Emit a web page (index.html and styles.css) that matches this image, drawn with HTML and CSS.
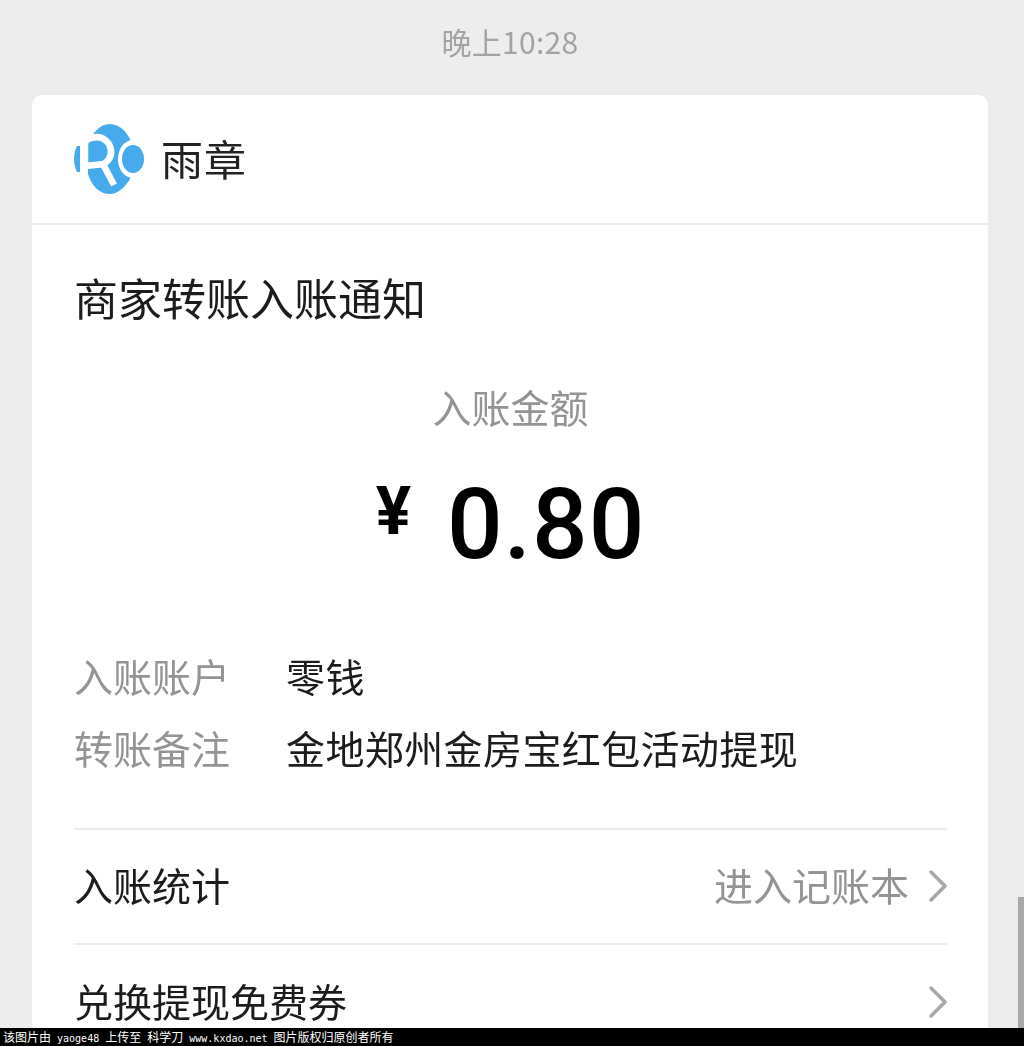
FILE: index.html
```html
<!DOCTYPE html>
<html lang="zh-CN">
<head>
<meta charset="utf-8">
<title>商家转账入账通知</title>
<link rel="stylesheet" href="styles.css">
</head>
<body>
<main class="screen">
  <p class="time">晚上10:28</p>
  <section class="card">
    <header class="brand">
      <svg class="logo" viewBox="0 0 80 80" width="80" height="80" aria-hidden="true">
        <path class="logo-blue" d="M10 27V53H7C3 45 3 35 7 27Z"/>
        <path class="logo-blue" d="M40 5C50 5 57 14 60 20V60C55 68 48 75 40 75C30 75 22 68 18 55V25C22 14 30 5 40 5Z"/>
        <ellipse class="logo-white" cx="63" cy="40" rx="15" ry="19"/>
        <ellipse class="logo-blue" cx="63" cy="40" rx="11" ry="14"/>
        <path class="logo-stroke" d="M15 47V22Q30 13 39 25Q45 37 34 45L15 47M33 45L44 66"/>
        <path class="logo-blue" d="M30 22C33 27 37 30 37 34A7 7 0 0 1 23 34C23 30 27 27 30 22Z"/>
      </svg>
      <span class="brand-name">雨章</span>
    </header>
    <div class="body">
      <h1 class="title">商家转账入账通知</h1>
      <div class="amount-block">
        <p class="amount-label">入账金额</p>
        <p class="amount"><span class="currency">¥</span><span class="value">0.80</span></p>
      </div>
      <dl class="details">
        <div class="detail"><dt>入账账户</dt><dd>零钱</dd></div>
        <div class="detail"><dt>转账备注</dt><dd>金地郑州金房宝红包活动提现</dd></div>
      </dl>
      <div class="link-row">
        <span class="link-label">入账统计</span>
        <span class="link-side"><span class="link-hint">进入记账本</span>
          <svg class="chevron" viewBox="0 0 18 32" width="18" height="32" aria-hidden="true"><path d="M2 2L16 16L2 30"/></svg>
        </span>
      </div>
      <div class="link-row">
        <span class="link-label">兑换提现免费券</span>
        <span class="link-side">
          <svg class="chevron" viewBox="0 0 18 32" width="18" height="32" aria-hidden="true"><path d="M2 2L16 16L2 30"/></svg>
        </span>
      </div>
    </div>
  </section>
  <div class="scrollbar"></div>
</main>
<footer class="watermark"><span class="cjk">该图片由</span> yaoge48 <span class="cjk">上传至</span> <span class="cjk">科学刀</span> www.kxdao.net <span class="cjk">图片版权归原创者所有</span></footer>
</body>
</html>
```
FILE: styles.css
```css
* { box-sizing: border-box; }
html, body { margin: 0; height: 100%; }
body {
  display: flex;
  flex-direction: column;
  height: 1046px;
  overflow: hidden;
  background: #ededed;
  font-family: "Noto Sans CJK SC", "Noto Sans", sans-serif;
  color: #1c1c1c;
}
.screen {
  position: relative;
  flex: 1;
  min-height: 0;
  overflow: hidden;
  padding: 0 36px 0 32px;
  filter: blur(0.55px);
}
.time {
  margin: 0;
  height: 95px;
  padding-top: 20px;
  text-align: center;
  font-size: 30px;
  line-height: 43px;
  letter-spacing: 0.3px;
  color: #a3a3a3;
}
.card {
  background: #fff;
  border-radius: 10px 10px 0 0;
  min-height: 1000px;
}
.brand {
  display: flex;
  align-items: center;
  height: 130px;
  padding: 0 0 3px 38px;
  border-bottom: 2px solid #ececec;
}
.logo { display: block; flex: none; margin-top: 2px; }
.logo-blue { fill: #45abec; }
.logo-white { fill: #fff; }
.logo-stroke { fill: none; stroke: #fff; stroke-width: 6.5; }
.brand-name {
  margin-left: 11px;
  font-size: 42px;
  line-height: 60px;
  letter-spacing: 1px;
  color: #222;
}
.body { padding: 0 41px 0 42px; }
.title {
  margin: 0;
  padding-top: 42px;
  font-size: 44px;
  line-height: 60px;
  font-weight: 400;
  color: #1c1c1c;
}
.amount-block { text-align: center; }
.amount-label {
  margin: 0;
  padding-top: 51px;
  font-size: 39px;
  line-height: 56px;
  color: #949494;
}
.amount {
  margin: 0;
  padding-top: 31px;
  display: flex;
  justify-content: center;
  align-items: flex-start;
  gap: 36px;
  height: 160px;
  font-family: Roboto, "Noto Sans", sans-serif;
  color: #000;
}
.currency {
  margin-top: 7px;
  font-size: 66px;
  line-height: 80px;
  font-weight: 700;
}
.value {
  font-size: 98px;
  line-height: 120px;
  letter-spacing: 1px;
  font-weight: 500;
}
.details { margin: 0; padding-top: 45px; }
.detail {
  display: flex;
  height: 72px;
  align-items: center;
  font-size: 39px;
}
.detail dt { width: 212px; color: #949494; }
.detail dd { margin: 0; letter-spacing: 0.4px; color: #1c1c1c; }
.link-row {
  display: flex;
  justify-content: space-between;
  align-items: center;
  height: 115px;
  padding-bottom: 2px;
  font-size: 39px;
  line-height: 50px;
  color: #1c1c1c;
}
.details + .link-row {
  margin-top: 45px;
  height: 117px;
  border-top: 2px solid #ececec;
  border-bottom: 2px solid #ececec;
}
.link-label, .link-hint { margin-bottom: 4px; }
.link-side { display: flex; align-items: center; gap: 20px; }
.link-hint { color: #949494; }
.chevron { display: block; fill: none; stroke: #a8a8a8; stroke-width: 3.5; stroke-linecap: round; stroke-linejoin: round; }
.scrollbar {
  position: absolute;
  top: 897px;
  right: 0;
  bottom: 0;
  width: 6px;
  background: #a9a9a9;
}
.watermark {
  flex: none;
  height: 18px;
  padding-left: 3px;
  background: #000;
  color: #fff;
  font-family: "DejaVu Sans Mono", monospace;
  font-size: 10px;
  line-height: 18px;
  white-space: pre;
}
.cjk { font-family: "Noto Sans CJK SC", sans-serif; font-size: 12px; }
```
